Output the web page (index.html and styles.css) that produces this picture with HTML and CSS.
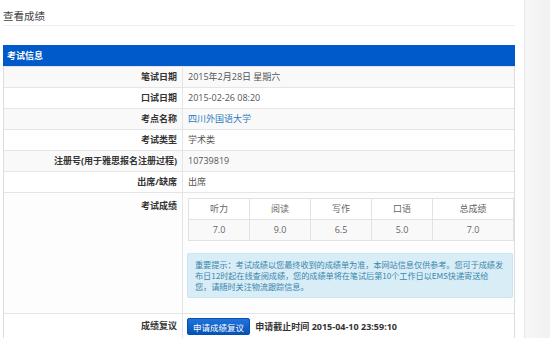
FILE: index.html
```html
<!DOCTYPE html>
<html lang="zh-CN">
<head>
    <meta charset="UTF-8">
    <title>查看成绩</title>
    <link rel="stylesheet" href="styles.css">
</head>
<body>
    <div class="page">
        <div class="main">
            <h1 class="page-title">查看成绩</h1>

            <div class="panel">
                <div class="panel-heading">考试信息</div>
                <table class="info-table">
                    <tr>
                        <th>笔试日期</th>
                        <td>2015年2月28日 星期六</td>
                    </tr>
                    <tr>
                        <th>口试日期</th>
                        <td>2015-02-26 08:20</td>
                    </tr>
                    <tr>
                        <th>考点名称</th>
                        <td><a href="#">四川外国语大学</a></td>
                    </tr>
                    <tr>
                        <th>考试类型</th>
                        <td>学术类</td>
                    </tr>
                    <tr>
                        <th>注册号(用于雅思报名注册过程)</th>
                        <td>10739819</td>
                    </tr>
                    <tr>
                        <th>出席/缺席</th>
                        <td>出席</td>
                    </tr>
                    <tr class="score-row">
                        <th>考试成绩</th>
                        <td>
                            <table class="score-table">
                                <tr>
                                    <th>听力</th>
                                    <th>阅读</th>
                                    <th>写作</th>
                                    <th>口语</th>
                                    <th class="total">总成绩</th>
                                </tr>
                                <tr>
                                    <td>7.0</td>
                                    <td>9.0</td>
                                    <td>6.5</td>
                                    <td>5.0</td>
                                    <td>7.0</td>
                                </tr>
                            </table>
                            <div class="alert">重要提示：考试成绩以您最终收到的成绩单为准，本网站信息仅供参考。您可于成绩发布日12时起在线查阅成绩，您的成绩单将在笔试后第10个工作日以EMS快递寄送给<br>您，请随时关注物流跟踪信息。</div>
                        </td>
                    </tr>
                    <tr class="review-row">
                        <th>成绩复议</th>
                        <td>
                            <button class="btn-review">申请成绩复议</button>
                            <span class="deadline">申请截止时间 2015-04-10 23:59:10</span>
                        </td>
                    </tr>
                </table>
            </div>
        </div>
        <div class="side"></div>
    </div>
</body>
</html>
```

FILE: styles.css
```css
html, body {
    margin: 0;
    padding: 0;
    height: 100%;
}

body {
    font-family: "Open Sans", "Noto Sans CJK SC", sans-serif;
    font-size: 9px;
    color: #555;
    background-color: #f4f4f4;
}

.page {
    display: flex;
    min-height: 100%;
}

.main {
    width: 521px;
    padding: 0 0 0 3px;
    background-color: #fff;
    border-right: 1px solid #e6e6e6;
}

.side {
    flex: 1;
    background: linear-gradient(to right, #f7f7f7, #f1f1f1);
}

.page-title {
    margin: 0 9px 19px 0;
    padding-top: 9px;
    height: 16px;
    font-size: 10.5px;
    font-weight: normal;
    line-height: 14px;
    color: #444;
    border-bottom: 1px solid #eee;
}

.panel {
    width: 512px;
    border: 1px solid #ddd;
    border-top: none;
    box-sizing: border-box;
}

.panel-heading {
    height: 21px;
    line-height: 21px;
    padding-left: 4px;
    background-color: #005ac9;
    color: #fff;
    font-weight: bold;
    margin: 0 -1px;
}

.info-table {
    width: 100%;
    border-collapse: collapse;
}

.info-table > tbody > tr > th,
.info-table > tbody > tr > td {
    height: 20px;
    padding: 0 5px;
    border-top: 1px solid #e5e5e5;
    vertical-align: middle;
    line-height: 14px;
}

.info-table > tbody > tr:nth-child(odd) {
    background-color: #f9f9f9;
}

.info-table > tbody > tr > th {
    width: 168px;
    text-align: right;
    font-weight: bold;
    color: #333;
    border-right: 1px solid #e5e5e5;
}

.info-table a {
    color: #2a78c0;
    text-decoration: none;
}

.info-table > tbody > tr.score-row {
    background-color: #fdfdfd;
}

.info-table > tbody > tr.score-row > th,
.info-table > tbody > tr.score-row > td {
    vertical-align: top;
    padding-top: 5px;
    padding-bottom: 15px;
}

.info-table > tbody > tr.score-row > td {
    padding-right: 0;
}

.info-table > tbody > tr.score-row > th {
    padding-top: 6px;
}

.score-table {
    width: 323px;
    border-collapse: collapse;
    table-layout: fixed;
    margin-bottom: 12px;
    color: #666;
}

.score-table th,
.score-table td {
    width: 60px;
    height: 20px;
    padding: 0;
    border: 1px solid #e2e2e2;
    text-align: center;
    font-weight: normal;
    background-color: #fff;
}

.score-table th.total {
    width: 80px;
}

.score-table td {
    background-color: #f9f9f9;
}

.alert {
    width: 312px;
    margin-left: -1px;
    padding: 5px 5px 5px 7px;
    background-color: #d9edf7;
    border: 1px solid #c8e6f2;
    border-radius: 2px;
    color: #3a87ad;
    font-family: "Noto Sans CJK SC", sans-serif;
    font-size: 8.2px;
    letter-spacing: -0.08px;
    line-height: 11px;
}

.info-table > tbody > tr.review-row {
    background-color: #fff;
}

.info-table > tbody > tr.review-row > th,
.info-table > tbody > tr.review-row > td {
    height: 24px;
    padding-top: 4px;
    vertical-align: top;
}

.info-table > tbody > tr.review-row > th {
    padding-top: 5px;
}

.btn-review {
    width: 63px;
    height: 17px;
    margin-left: -1px;
    padding: 0;
    border: 1px solid #0a4fae;
    border-radius: 2px;
    background: linear-gradient(#1f74dc, #0652b6);
    color: #fff;
    font-family: inherit;
    font-size: 8.5px;
    vertical-align: middle;
}

.deadline {
    margin-left: 3px;
    font-weight: bold;
    color: #333;
    vertical-align: middle;
}
```
